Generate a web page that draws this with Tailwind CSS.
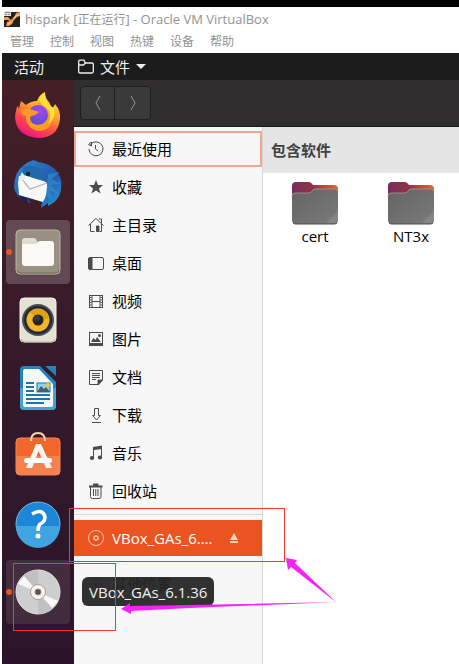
<!DOCTYPE html>
<html lang="zh-CN">
<head>
<meta charset="utf-8">
<meta name="viewport" content="width=device-width, initial-scale=1">
<title>hispark [正在运行] - Oracle VM VirtualBox</title>
<script src="https://cdn.jsdelivr.net/npm/@tailwindcss/browser@4"></script>
</head>
<body class="bg-white font-['Open_Sans','Noto_Sans_CJK_SC',sans-serif] overflow-x-hidden">
<div class="relative flex min-h-screen flex-col pl-0.5">
  <div class="h-[7px] shrink-0 bg-black"></div>
  <header class="shrink-0 bg-white text-[#929292]">
    <div class="flex h-6 items-center gap-[5px] pl-0.5">
      <svg class="size-4" viewBox="0 0 16 16" aria-hidden="true">
        <rect y="1" width="16" height="15" fill="#24201f"/>
        <path d="M9 7L11 5L12 2L16 1V5L13 6L10 9L8 13L5 15H2L3 11L6 10L4 9L0 9V6L4 6L7 9Z" fill="#f0994e"/>
        <path d="M10 7L12 5L15 4M4 13L7 11" stroke="#ffc88b" stroke-width="1.500"/>
        <rect width="7" height="5" fill="#e2e2e2"/><path d="M1 1.500H6M1 3.500H3M4 3.500H6" stroke="#888"/>
      </svg>
      <h1 class="whitespace-nowrap text-[13px] leading-4">hispark [<span class="text-xs">正在运行</span>] - Oracle VM VirtualBox</h1>
    </div>
    <nav class="flex h-[22px] items-center gap-4 pl-2 text-xs" aria-label="虚拟机菜单">
      <button>管理</button><button>控制</button><button>视图</button><button>热键</button><button>设备</button><button>帮助</button>
    </nav>
  </header>
  <div class="flex h-[27px] shrink-0 items-center bg-[#1c1c1c] pl-3 text-[15px] leading-5 text-[#f0f0f0]">
    <button class="w-16 text-left">活动</button>
    <button class="flex items-center gap-1.5">
      <svg class="h-4 w-4" viewBox="0 0 16 16" fill="none" stroke="#eee" stroke-width="1.3" aria-hidden="true"><path d="M.7 12.5V2.5Q.7 1.2 2 1.2H6L7.3 4H14Q15.3 4 15.3 5.3V12.5Q15.3 14 14 14H2Q.7 14 .7 12.5ZM.7 6H5.5L7.3 4"/></svg>
      <span>文件</span>
      <svg class="h-[5px] w-[10px]" viewBox="0 0 10 5" fill="#eee" aria-hidden="true"><path d="M0 0H10L5 5Z"/></svg>
    </button>
  </div>

  <div class="flex grow">
    <nav class="flex w-[72px] shrink-0 flex-col items-center gap-1 bg-linear-to-b from-[#451f26] via-[#35192b] to-[#2b1429] pt-1" aria-label="Dock">
      <button class="grid size-16 place-items-center" aria-label="Firefox">
        <svg class="size-12" viewBox="0 0 48 48">
          <defs><linearGradient id="fx" x1=".8" y1="0" x2=".3" y2="1"><stop stop-color="#fff04a"/><stop offset=".4" stop-color="#ffa42c"/><stop offset=".7" stop-color="#ff4845"/><stop offset="1" stop-color="#ed118b"/></linearGradient>
          <radialGradient id="fp" cx=".6" cy=".3" r=".8"><stop stop-color="#a544f5"/><stop offset="1" stop-color="#5351c8"/></radialGradient></defs>
          <path d="M7 9L12 13Q17 9 23 9Q25 3 31 0Q31 6 35 10L38 16Q40 15 41 12Q47 19 46 27Q44 46 24 46Q2 44 1 25Q2 15 4 14L5 17Q6 12 7 9Z" fill="url(#fx)"/>
          <path d="M24 10Q31 7 36 16L38 28Q36 39 24 39Q12 36 12 25L23 17Z" fill="#ff9c27"/>
          <circle cx="24" cy="23" r="10" fill="url(#fp)"/>
          <path d="M7 18Q14 15 19 18L25 20Q21 24 17 24Q15 27 18 31Q13 30 12 24Q6 23 7 18Z" fill="#ff9829"/>
          <path d="M29 1Q22 9 30 14Q40 20 34 32Q43 26 40 16Q32 13 30 1Z" fill="#ffde3e"/>
        </svg>
      </button>
      <button class="grid size-16 place-items-center" aria-label="Thunderbird">
        <svg class="size-12" viewBox="0 0 48 48">
          <defs><linearGradient id="tb" x2="1" y2="1"><stop stop-color="#2f8ad2"/><stop offset=".6" stop-color="#2456b0"/><stop offset="1" stop-color="#27a4d8"/></linearGradient></defs>
          <path d="M17 1Q20-1 24 2Q42 4 47 20Q49 36 39 43L34 46V43L27 48L28 42L12 37L17 43Q2 39 0 27Q1 11 9 6Q13 2 17 1Z" fill="url(#tb)"/>
          <path d="M5 16Q19 13 33 23Q34 34 29 42L5 35L4 23Z" fill="#f8f8f8"/>
          <path d="M9 7Q28 1 33 22Q18 18 8 14Z" fill="#2268aa"/>
          <path d="M8 19L16 29L33 23" fill="none" stroke="#a9afb5" stroke-width="1.200"/>
          <path d="M5 19L8 12L12 18L7 21Z" fill="#e5edf2"/><circle cx="14" cy="14" r="2.200" fill="#152a44"/>
          <path d="M34 14L46 12L38 19L47 24L37 25L44 33L36 31L38 40L32 36Z" fill="#3294ca" opacity=".6"/>
          <path d="M4 35L13 38L14 43Q7 40 4 35Z" fill="#192052"/>
        </svg>
      </button>
      <button class="relative grid size-16 place-items-center rounded bg-white/20" aria-label="文件">
        <span class="absolute left-0 size-1.5 rounded-full bg-[#e95420]"></span>
        <svg class="size-12" viewBox="0 0 48 48"><rect x="2" y="2" width="44" height="44" rx="4" fill="#989080" stroke="#bbb4a4"/><path d="M3 42Q3 45 7 45H42Q45 45 45 42" fill="none" stroke="#716954"/><path d="M8 17V13Q8 10 11 10H20Q22 10 23 13L25 18Z" fill="#dedbd1"/><path d="M8 16H22L25 13H37Q40 13 40 16V35Q40 38 37 38H11Q8 38 8 35Z" fill="#faf9f6"/></svg>
      </button>
      <button class="grid size-16 place-items-center" aria-label="Rhythmbox">
        <svg class="size-12" viewBox="0 0 48 48"><rect x="6" y="2" width="36" height="44" rx="4" fill="#e5e1d5" stroke="#f4f1e8"/><path d="M7 43Q8 46 11 46H37Q41 46 41 43" stroke="#aaa590" fill="none"/><circle cx="24" cy="24" r="16" fill="#484c54"/><circle cx="24" cy="24" r="14" fill="#262830"/><circle cx="24" cy="24" r="11.5" fill="#f1b62a"/><path d="M16 16A11.500 11.500 0 0 1 35 23L24 24Z" fill="#dba311"/><circle cx="24" cy="24" r="5.500" fill="#242424"/><circle cx="23" cy="22" r="3" fill="#393939"/></svg>
      </button>
      <button class="grid size-16 place-items-center" aria-label="LibreOffice Writer">
        <svg class="size-12" viewBox="0 0 48 48"><path d="M10 2H26L42 18V42Q42 46 38 46H10Q6 46 6 42V6Q6 2 10 2Z" fill="#2085bd"/><path d="M6 24H42V42Q42 46 38 46H10Q6 46 6 42Z" fill="#43a3d2"/><path d="M11 5H25L39 20V41Q39 43 37 43H11Q9 43 9 41V7Q9 5 11 5Z" fill="#f5f8f9"/><path d="M31 2H42V12Z" fill="#2384bd"/><path d="M12 19H20M12 23H20M12 27H20M12 31H36M12 35H36M12 39H30" stroke="#1d75a9" stroke-width="2"/><rect x="23" y="19" width="13" height="9" fill="#8fd1f2" stroke="#1e78ad"/><circle cx="34" cy="21" r="2" fill="#f9c331"/><path d="M23 28L27 22L30 25L32 23L36 28Z" fill="#505b60"/></svg>
      </button>
      <button class="grid size-16 place-items-center" aria-label="Ubuntu Software">
        <svg class="size-12" viewBox="0 2 48 48"><rect x="2" y="8" width="44" height="37" rx="4" fill="#f0662b" stroke="#f68a51"/><path d="M2 26H46V41Q46 45 42 45H6Q2 45 2 41Z" fill="#f3824f"/><path d="M17 11Q17 3 24 3Q31 3 31 11" fill="none" stroke="#f5d4a8" stroke-width="2"/><path d="M22 14H27L38 38H32L24.500 21L18 38H12Z" fill="#fff5ec"/><rect x="10" y="28" width="28" height="5" rx="2.500" fill="#fff"/></svg>
      </button>
      <button class="grid size-16 place-items-center" aria-label="帮助">
        <svg class="size-12" viewBox="0 0 48 48"><circle cx="24" cy="24" r="22" fill="#1c87d8" stroke="#77b9e3"/><path d="M2 26H46A22 22 0 0 1 2 26Z" fill="#41a3e2"/><path d="M18 14Q29 8 31 17Q31 22 26 24Q24 26 24 31" fill="none" stroke="#fff" stroke-width="3.500"/><circle cx="24" cy="36" r="2.500" fill="#fff"/></svg>
      </button>
      <button class="relative grid size-16 place-items-center rounded bg-white/10" aria-label="VBox_GAs_6.1.36" aria-describedby="tip">
        <span class="absolute left-0 size-1.5 rounded-full bg-[#e95420]"></span>
        <svg class="size-12" viewBox="0 0 48 48"><circle cx="24" cy="24" r="22" fill="#cecece" stroke="#e5e5e5"/><path d="M24 24L8 9A22 22 0 0 1 24 2ZM24 24L39 40A22 22 0 0 1 24 46Z" fill="#c1c1c1"/><path d="M24 24L4 16L10 8ZM24 24L44 33L38 40Z" fill="#f8f8f8"/><circle cx="24" cy="24" r="7.500" fill="#f7f6f1" stroke="#a9a18d"/><circle cx="24" cy="24" r="3" fill="#555" stroke="#888"/></svg>
      </button>
    </nav>

    <div class="flex min-w-0 grow flex-col">
      <div class="flex h-[47px] shrink-0 items-center border-b border-[#181818] bg-[#302e2f] pl-1.5">
        <div class="flex h-[34px] divide-x divide-[#202020] rounded border border-[#202020] bg-[#3a3a3a]">
          <button class="grid w-[34px] place-items-center" aria-label="后退"><svg class="h-4 w-2" viewBox="0 0 8 16" fill="none" stroke="#969696"><path d="M6 1L2 8L6 15"/></svg></button>
          <button class="grid w-[35px] place-items-center" aria-label="前进"><svg class="h-4 w-2" viewBox="0 0 8 16" fill="none" stroke="#969696"><path d="M2 1L6 8L2 15"/></svg></button>
        </div>
      </div>
      <div class="flex grow">
        <aside class="w-[189px] shrink-0 border-r border-[#d8d8d8] bg-[#f7f7f7] pt-1 text-[15px] leading-5 text-black">
          <nav class="flex flex-col gap-0.5" aria-label="位置">
            <a href="#" class="flex h-9 items-center gap-2 pl-3.5 outline-2 -outline-offset-2 outline-[#f3a78b]"><svg class="size-4" viewBox="0 0 16 16" fill="none" stroke="#4b4b4b"><path d="M2.500 3.500A7 7 0 1 1 1 8M7.500 4V8L10 10M.5 3.500L3.500 1V5Z"/></svg>最近使用</a>
            <a href="#" class="flex h-9 items-center gap-2 pl-3.5"><svg class="size-4" viewBox="0 0 16 16" fill="#4b4b4b"><path d="M8 1L10 6H15L11 9.500L12.500 14.500L8 11.500L3.500 14.500L5 9.500L1 6H6Z"/></svg>收藏</a>
            <a href="#" class="flex h-9 items-center gap-2 pl-3.5"><svg class="size-4" viewBox="0 0 16 16" fill="none" stroke="#4b4b4b"><path d="M.5 8.500L8 1.500L15.500 8.500M2.500 7V14.500H6.500M13.500 7V14.500H11.500M11 2H13.500V6"/><path d="M8.500 9H11V14.500H8.500Z" fill="#4b4b4b"/></svg>主目录</a>
            <a href="#" class="flex h-9 items-center gap-2 pl-3.5"><svg class="size-4" viewBox="0 0 16 16" fill="none" stroke="#4b4b4b"><rect x=".5" y="2.500" width="15" height="12" rx="1.500"/><path d="M1 3H4V14H1Z" fill="#4b4b4b"/></svg>桌面</a>
            <a href="#" class="flex h-9 items-center gap-2 pl-3.5"><svg class="size-4" viewBox="0 0 16 16" fill="none" stroke="#4b4b4b"><path d="M1.500 2V15M14.500 2V15M4 2V15M12 2V15M1 2.500H15M4 8.500H12M1 14.500H15"/><path d="M2.500 4V14M13.500 4V14" stroke-width="2" stroke-dasharray="1 1.500"/></svg>视频</a>
            <a href="#" class="flex h-9 items-center gap-2 pl-3.5"><svg class="size-4" viewBox="0 0 16 16" fill="#4b4b4b"><path d="M1 1H15V15H1ZM2 2V12H14V2Z" fill-rule="evenodd"/><path d="M3 11L5.500 7L7.500 9L9 6L13 11Z"/><circle cx="11.500" cy="4.500" r="1.500"/></svg>图片</a>
            <a href="#" class="flex h-9 items-center gap-2 pl-3.5"><svg class="size-4" viewBox="0 0 16 16" fill="none" stroke="#4b4b4b"><path d="M1.500 1.500H14.500V11L11 15.500H1.500ZM4 4.500H12M4 6.500H12M4 8.500H12M4 10.500H8"/><path d="M10 11H14L10 15Z" fill="#4b4b4b"/></svg>文档</a>
            <a href="#" class="flex h-9 items-center gap-2 pl-3.5"><svg class="size-4" viewBox="0 0 16 16" fill="none" stroke="#4b4b4b"><path d="M6.500 1.500H10.500V8.500H12.500L8.500 13L4.500 8.500H6.500ZM4 15.500H13"/></svg>下载</a>
            <a href="#" class="flex h-9 items-center gap-2 pl-3.5"><svg class="size-4" viewBox="0 0 16 16" fill="#4b4b4b"><path d="M5 2L14 .5V4L6 5V13H5Z"/><path d="M13 2H14V12H13Z"/><ellipse cx="4" cy="13" rx="2.200" ry="2"/><ellipse cx="12" cy="12.500" rx="2.200" ry="2"/></svg>音乐</a>
            <a href="#" class="flex h-9 items-center gap-2 pl-3.5"><svg class="size-4" viewBox="0 0 16 16" fill="none" stroke="#4b4b4b"><path d="M2.500 4V13.500Q2.500 15.500 4.500 15.500H11Q13 15.500 13 13.500V4M5.500 6V13M7.750 6V13M10 6V13"/><path d="M1 3.500H14.500M5 1.500H10.500" stroke-width="2"/></svg>回收站</a>
          </nav>
          <div class="mt-[5px] border-t border-[#d8d8d8] pt-[5px]">
            <div class="flex h-9 items-center bg-[#e95420] pl-3.5 text-white">
              <a href="#" class="flex w-[141px] items-center gap-2"><svg class="size-4" viewBox="0 0 16 16" fill="none" stroke="#ffc4ac"><circle cx="8" cy="8" r="7.500"/><circle cx="8" cy="8" r="2" stroke-width="1.500"/></svg>VBox_GAs_6.…</a>
              <button aria-label="弹出"><svg class="h-[10px] w-[10px]" viewBox="0 0 10 10" fill="#ffcebb"><path d="M5 0L9 7H1ZM1 8H9V10H1Z"/></svg></button>
            </div>
          </div>
          <div class="relative mt-2.5">
            <a href="#" class="flex h-9 items-center gap-2 pl-3.5"><svg class="size-4" viewBox="0 0 16 16" stroke="#4b4b4b"><path d="M8 2V14M2 8H14"/></svg>其他位置</a>
            <div id="tip" role="tooltip" class="absolute left-2 top-[11px] flex h-[29px] items-center rounded-md bg-[#262626]/95 px-[7px] text-[#f0f0f0]">VBox_GAs_6.1.36</div>
          </div>
        </aside>
        <main class="min-w-0 grow bg-white">
          <h2 class="flex h-[46px] items-center bg-[#e5e5e5] pl-2 text-[15px] font-bold text-[#414141]">包含软件</h2>
          <div class="grid grid-cols-[repeat(auto-fill,96px)] pt-2 pl-1 text-[15px] leading-5 text-black">
            <a href="#" class="flex flex-col items-center">
              <svg class="h-[45px] w-12" viewBox="0 0 48 45"><defs><linearGradient id="fo"><stop stop-color="#762b58"/><stop offset=".45" stop-color="#933246"/><stop offset="1" stop-color="#ee6528"/></linearGradient><linearGradient id="fg" x2="1" y2="1"><stop stop-color="#636363"/><stop offset="1" stop-color="#7b7b7b"/></linearGradient></defs><path d="M1 5Q1 1 5 1H18Q20 1 22 4H43Q47 4 47 8V20H1Z" fill="url(#fo)"/><path d="M1 15Q1 12 4 12H18Q20 12 22 9Q23 8 25 8H44Q47 8 47 11V39Q47 43 43 43H5Q1 43 1 39Z" fill="url(#fg)"/><path d="M1 15Q1 12 4 12H18Q20 12 22 9Q23 8 25 8H44Q47 8 47 11" fill="none" stroke="#929292"/><path d="M2 42Q3 43 5 43H43Q45 43 46 42" stroke="#4b4b4b" fill="none"/><path d="M35 42L47 30V39Q47 42 43 42Z" fill="#858585"/></svg>cert</a>
            <a href="#" class="flex flex-col items-center">
              <svg class="h-[45px] w-12" viewBox="0 0 48 45"><path d="M1 5Q1 1 5 1H18Q20 1 22 4H43Q47 4 47 8V20H1Z" fill="url(#fo)"/><path d="M1 15Q1 12 4 12H18Q20 12 22 9Q23 8 25 8H44Q47 8 47 11V39Q47 43 43 43H5Q1 43 1 39Z" fill="url(#fg)"/><path d="M1 15Q1 12 4 12H18Q20 12 22 9Q23 8 25 8H44Q47 8 47 11" fill="none" stroke="#929292"/><path d="M2 42Q3 43 5 43H43Q45 43 46 42" stroke="#4b4b4b" fill="none"/><path d="M35 42L47 30V39Q47 42 43 42Z" fill="#858585"/></svg>NT3x</a>
          </div>
        </main>
      </div>
    </div>
  </div>
  <!-- Annotations drawn over the window -->
  <svg class="pointer-events-none absolute left-0 top-0 h-[664px] w-[459px]" viewBox="0 0 459 664" aria-hidden="true">
    <g fill="none" stroke="#fa3434"><rect x="69.500" y="508.500" width="215" height="53"/><rect x="13.500" y="563.500" width="102" height="67"/></g>
    <path d="M286 558L297 560L295 563L337 603L291 567L288 570ZM337 602L190 605L130 606V603L121 609L131 614V611L190 608Z" fill="#f622f6"/>
  </svg>
</div>
</body>
</html>
